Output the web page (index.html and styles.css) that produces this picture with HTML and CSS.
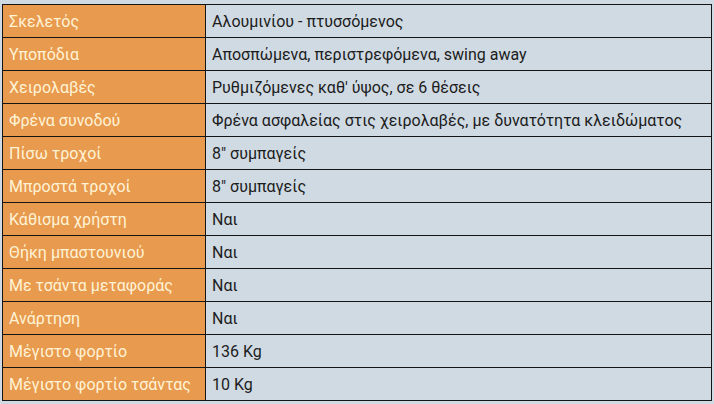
FILE: index.html
```html
<!DOCTYPE html>
<html lang="el">
<head>
<meta charset="utf-8">
<link rel="stylesheet" href="styles.css">
</head>
<body>
<table class="specs">
<tbody>
<tr><th>Σκελετός</th><td>Αλουμινίου - πτυσσόμενος</td></tr>
<tr><th>Υποπόδια</th><td>Αποσπώμενα, περιστρεφόμενα, swing away</td></tr>
<tr><th>Χειρολαβές</th><td>Ρυθμιζόμενες καθ' ύψος, σε 6 θέσεις</td></tr>
<tr><th>Φρένα συνοδού</th><td>Φρένα ασφαλείας στις χειρολαβές, με δυνατότητα κλειδώματος</td></tr>
<tr><th>Πίσω τροχοί</th><td>8" συμπαγείς</td></tr>
<tr><th>Μπροστά τροχοί</th><td>8" συμπαγείς</td></tr>
<tr><th>Κάθισμα χρήστη</th><td>Ναι</td></tr>
<tr><th>Θήκη μπαστουνιού</th><td>Ναι</td></tr>
<tr><th>Με τσάντα μεταφοράς</th><td>Ναι</td></tr>
<tr><th>Ανάρτηση</th><td>Ναι</td></tr>
<tr><th>Μέγιστο φορτίο</th><td>136 Kg</td></tr>
<tr><th>Μέγιστο φορτίο τσάντας</th><td>10 Kg</td></tr>
</tbody>
</table>
</body>
</html>
```
FILE: styles.css
```css
html, body {
  margin: 0;
  background: #d0dae3;
}
body {
  padding: 4px 2px;
  font-family: Roboto, "Noto Sans", sans-serif;
  font-size: 16px;
}
.specs {
  border-collapse: collapse;
  width: 710px;
}
.specs th, .specs td {
  border: 1px solid #151515;
  height: 33px;
  padding: 0 6px;
  text-align: left;
  font-weight: 400;
  box-sizing: border-box;
}
.specs th {
  width: 203px;
  background: #e89a4e;
  color: #fff3d6;
}
.specs td {
  color: #1c1c1c;
}
```
